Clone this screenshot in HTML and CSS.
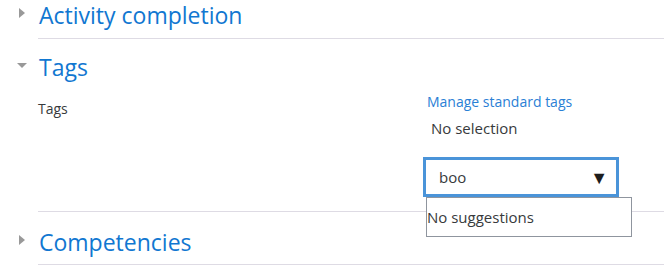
FILE: index.html
```html
<!DOCTYPE html>
<html lang="en">
  <head>
    <meta charset="UTF-8" />
    <meta name="viewport" content="width=device-width, initial-scale=1.0" />
    <title>Edit settings</title>
    <link rel="stylesheet" href="styles.css">
  </head>

  <body>
    <div class="section collapsed">
      <div class="legend">
        <span class="toggle"></span>
        <h3>Activity completion</h3>
      </div>
    </div>

    <div class="section expanded">
      <div class="legend">
        <span class="toggle"></span>
        <h3>Tags</h3>
      </div>
      <div class="formRow">
        <div class="formLabel">Tags</div>
        <div class="formField">
          <a href="#" class="manageLink">Manage standard tags</a>
          <div class="selection">No selection</div>
          <div class="tagInput">
            <div class="inputBox">
              <span>boo</span>
              <span class="arrow">&#9660;</span>
            </div>
            <div class="suggestions">No suggestions</div>
          </div>
        </div>
      </div>
    </div>

    <div class="section collapsed">
      <div class="legend">
        <span class="toggle"></span>
        <h3>Competencies</h3>
      </div>
    </div>
  </body>
</html>
```

FILE: styles.css
```css
body {
  margin: 0;
  font-family: "Open Sans", "Noto Sans", sans-serif;
  color: #373a3c;
  background: #fff;
  overflow: hidden;
}

.section {
  margin-left: 38px;
  border-bottom: 1px solid #dedbe4;
}

.legend {
  display: flex;
  align-items: center;
  position: relative;
}

.legend h3 {
  margin: 0;
  padding-left: 1px;
  font-size: 23px;
  font-weight: normal;
  color: #1177d1;
  line-height: 30px;
}

/* collapse / expand arrows */
.toggle {
  position: absolute;
  width: 0;
  height: 0;
}

.collapsed .toggle {
  top: 8px;
  left: -19px;
  border-top: 5px solid transparent;
  border-bottom: 5px solid transparent;
  border-left: 6px solid #999;
}

.expanded .toggle {
  top: 11px;
  left: -21px;
  border-left: 5px solid transparent;
  border-right: 5px solid transparent;
  border-top: 5px solid #999;
}

.section:first-child .legend {
  padding: 0 0 8px;
}

.section:nth-child(2) {
  padding-top: 13px;
}

.section:nth-child(2) .legend {
  padding: 0 0 6px;
}

.section:nth-child(3) {
  padding-top: 15px;
}

.section:nth-child(3) .legend {
  padding: 0 0 7px;
}

.formRow {
  display: flex;
  padding: 4px 0 14px;
}

.formLabel {
  width: 389px;
  font-size: 14px;
  padding-top: 7px;
}

.formField {
  display: flex;
  flex-direction: column;
  align-items: flex-start;
}

.manageLink {
  font-size: 14px;
  color: #2a80d5;
  text-decoration: none;
  line-height: 20px;
}

.selection {
  font-size: 15px;
  margin: 5px 0 0 4px;
  line-height: 22px;
}

.tagInput {
  position: relative;
  margin: 18px 0 0 -4px;
}

.inputBox {
  box-sizing: border-box;
  width: 196px;
  height: 40px;
  border: 3px solid #4a94d9;
  display: flex;
  align-items: center;
  justify-content: space-between;
  padding: 0 8px 0 13px;
  font-size: 15px;
}

.arrow {
  font-size: 18px;
  color: #1d1d1d;
}

.suggestions {
  position: absolute;
  top: 40px;
  left: 3px;
  width: 206px;
  box-sizing: border-box;
  height: 40px;
  border: 1px solid #8f959e;
  background: #fff;
  font-size: 15px;
  padding: 9px 0 0 0;
}
```
